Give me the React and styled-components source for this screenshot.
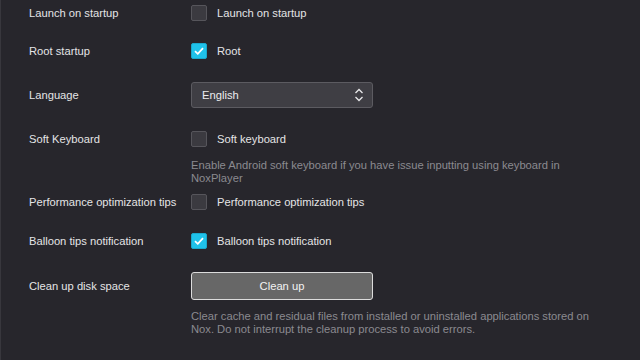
import React from "react";
import styled, { createGlobalStyle } from "styled-components";

const GlobalStyle = createGlobalStyle`
  html, body {
    margin: 0;
    padding: 0;
    background: #27262c;
  }
  body {
    font-family: "Liberation Sans", Arial, sans-serif;
    font-size: 11.2px;
    color: #e2e2e4;
  }
`;

const Page = styled("div")`
  width: 640px;
  height: 360px;
  box-sizing: border-box;
  border-left: 1px solid #38373d;
  padding-left: 28px;
  overflow: hidden;
`;

const Row = styled("div")`
  display: grid;
  grid-template-columns: 162px 1fr;
  align-items: center;
  height: ${(p) => p.$h || 26}px;
  margin-top: ${(p) => p.$mt || 0}px;
`;

const Label = styled("span")`
  color: #e4e4e6;
  white-space: nowrap;
`;

const CheckLine = styled("label")`
  display: flex;
  align-items: center;
  gap: 10px;
  color: #e4e4e6;
`;

const Box = styled("span")`
  width: 16px;
  height: 16px;
  box-sizing: border-box;
  border-radius: 2px;
  border: 1px solid ${(p) => (p.$checked ? "#1aa8cc" : "#56555b")};
  background: ${(p) => (p.$checked ? "#1fc2ea" : "#3b3a40")};
  display: flex;
  align-items: center;
  justify-content: center;
`;

const Select = styled("div")`
  width: 182px;
  height: 26px;
  box-sizing: border-box;
  border: 1px solid #5c5b61;
  border-radius: 3px;
  background: #3f3e44;
  display: flex;
  align-items: center;
  justify-content: space-between;
  padding: 0 8px 0 10px;
  color: #ececee;
`;

const Button = styled("button")`
  width: 182px;
  height: 28px;
  box-sizing: border-box;
  border: 1px solid #dcdcdc;
  border-radius: 3px;
  background: #676767;
  color: #f2f2f2;
  font: inherit;
`;

const Note = styled("p")`
  margin: ${(p) => p.$mt || 0}px 0 0 162px;
  width: 408px;
  color: #8b8a90;
  line-height: 13px;
`;

const Check = ({ checked, children }) => (
  <CheckLine>
    <Box $checked={checked}>
      {checked && (
        <svg width="10" height="8" viewBox="0 0 10 8">
          <path d="M1 4.2 L3.8 6.8 L9 1.2" stroke="#fff" strokeWidth="1.8" fill="none" />
        </svg>
      )}
    </Box>
    {children}
  </CheckLine>
);

export default function App() {
  return (
    <Page>
      <GlobalStyle />
      <Row>
        <Label>Launch on startup</Label>
        <Check>Launch on startup</Check>
      </Row>
      <Row $mt={12}>
        <Label>Root startup</Label>
        <Check checked>Root</Check>
      </Row>
      <Row $mt={18}>
        <Label>Language</Label>
        <Select>
          English
          <svg width="10" height="14" viewBox="0 0 10 14">
            <path d="M1.5 5 L5 1.5 L8.5 5 M1.5 9 L5 12.5 L8.5 9" stroke="#e8e8ea" strokeWidth="1.3" fill="none" />
          </svg>
        </Select>
      </Row>
      <Row $mt={18}>
        <Label>Soft Keyboard</Label>
        <Check>Soft keyboard</Check>
      </Row>
      <Note $mt={7}>
        Enable Android soft keyboard if you have issue inputting using keyboard in NoxPlayer
      </Note>
      <Row $mt={4}>
        <Label>Performance optimization tips</Label>
        <Check>Performance optimization tips</Check>
      </Row>
      <Row $mt={13}>
        <Label>Balloon tips notification</Label>
        <Check checked>Balloon tips notification</Check>
      </Row>
      <Row $mt={18} $h={28}>
        <Label>Clean up disk space</Label>
        <div>
          <Button>Clean up</Button>
        </div>
      </Row>
      <Note $mt={10}>
        Clear cache and residual files from installed or uninstalled applications stored on Nox. Do not interrupt the cleanup process to avoid errors.
      </Note>
    </Page>
  );
}
